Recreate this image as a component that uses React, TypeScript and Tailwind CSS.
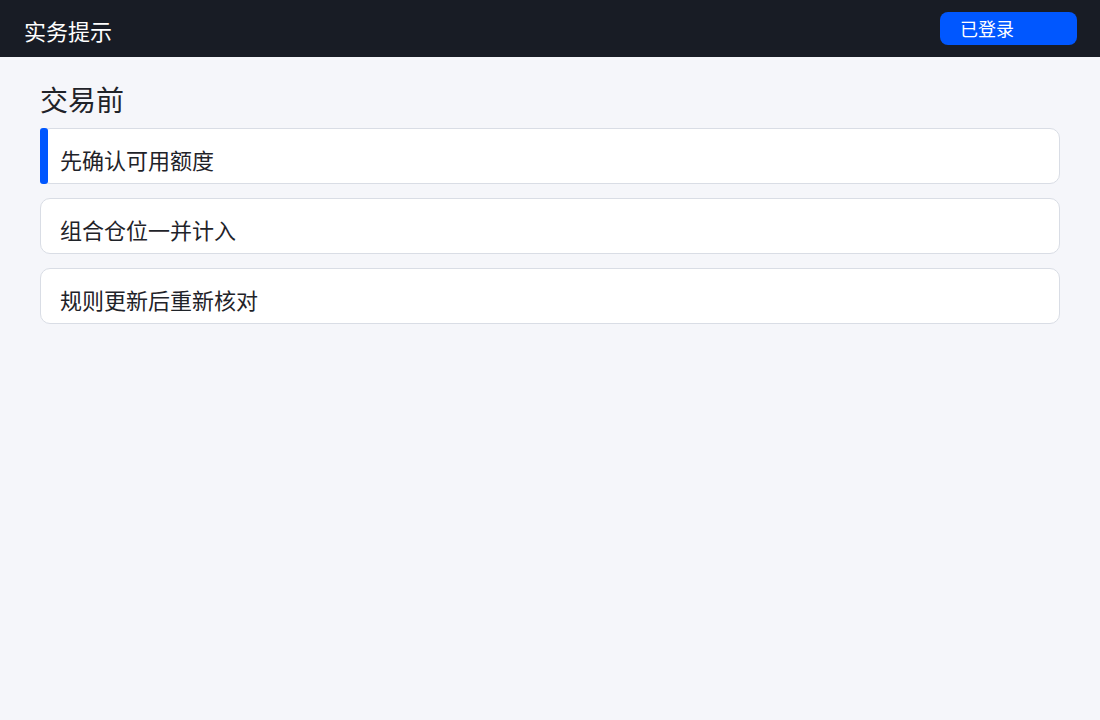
const items = [
  { id: 1, label: "先确认可用额度", active: true },
  { id: 2, label: "组合仓位一并计入", active: false },
  { id: 3, label: "规则更新后重新核对", active: false },
];

export default function App() {
  return (
    <div
      className="min-h-screen bg-[#f5f6fa] text-[#1f2329]"
      style={{ fontFamily: '"Noto Sans CJK SC", "Noto Sans", sans-serif' }}
    >
      <header className="h-[57px] bg-[#181c25] flex items-center justify-between pl-6 pr-[23px]">
        <h1 className="text-[22px] text-white pt-[4px]">实务提示</h1>
        <button className="h-[33px] w-[137px] rounded-lg bg-[#0057ff] text-white text-[18px] text-left pl-5">
          已登录
        </button>
      </header>

      <main className="px-10 pt-[24px]">
        <h2 className="text-[28px] leading-[36px] mb-[11px]">交易前</h2>
        <div className="flex flex-col gap-[14px]">
          {items.map((item) => (
            <div
              key={item.id}
              className="relative h-[56px] rounded-[10px] border border-[#d9dde5] bg-white flex items-center pt-[6px] pl-[19px]"
            >
              {item.active && (
                <span className="absolute -left-px -top-px -bottom-px w-[8px] rounded-[3px] bg-[#0057ff]" />
              )}
              <span className="text-[22px]">{item.label}</span>
            </div>
          ))}
        </div>
      </main>
    </div>
  );
}
